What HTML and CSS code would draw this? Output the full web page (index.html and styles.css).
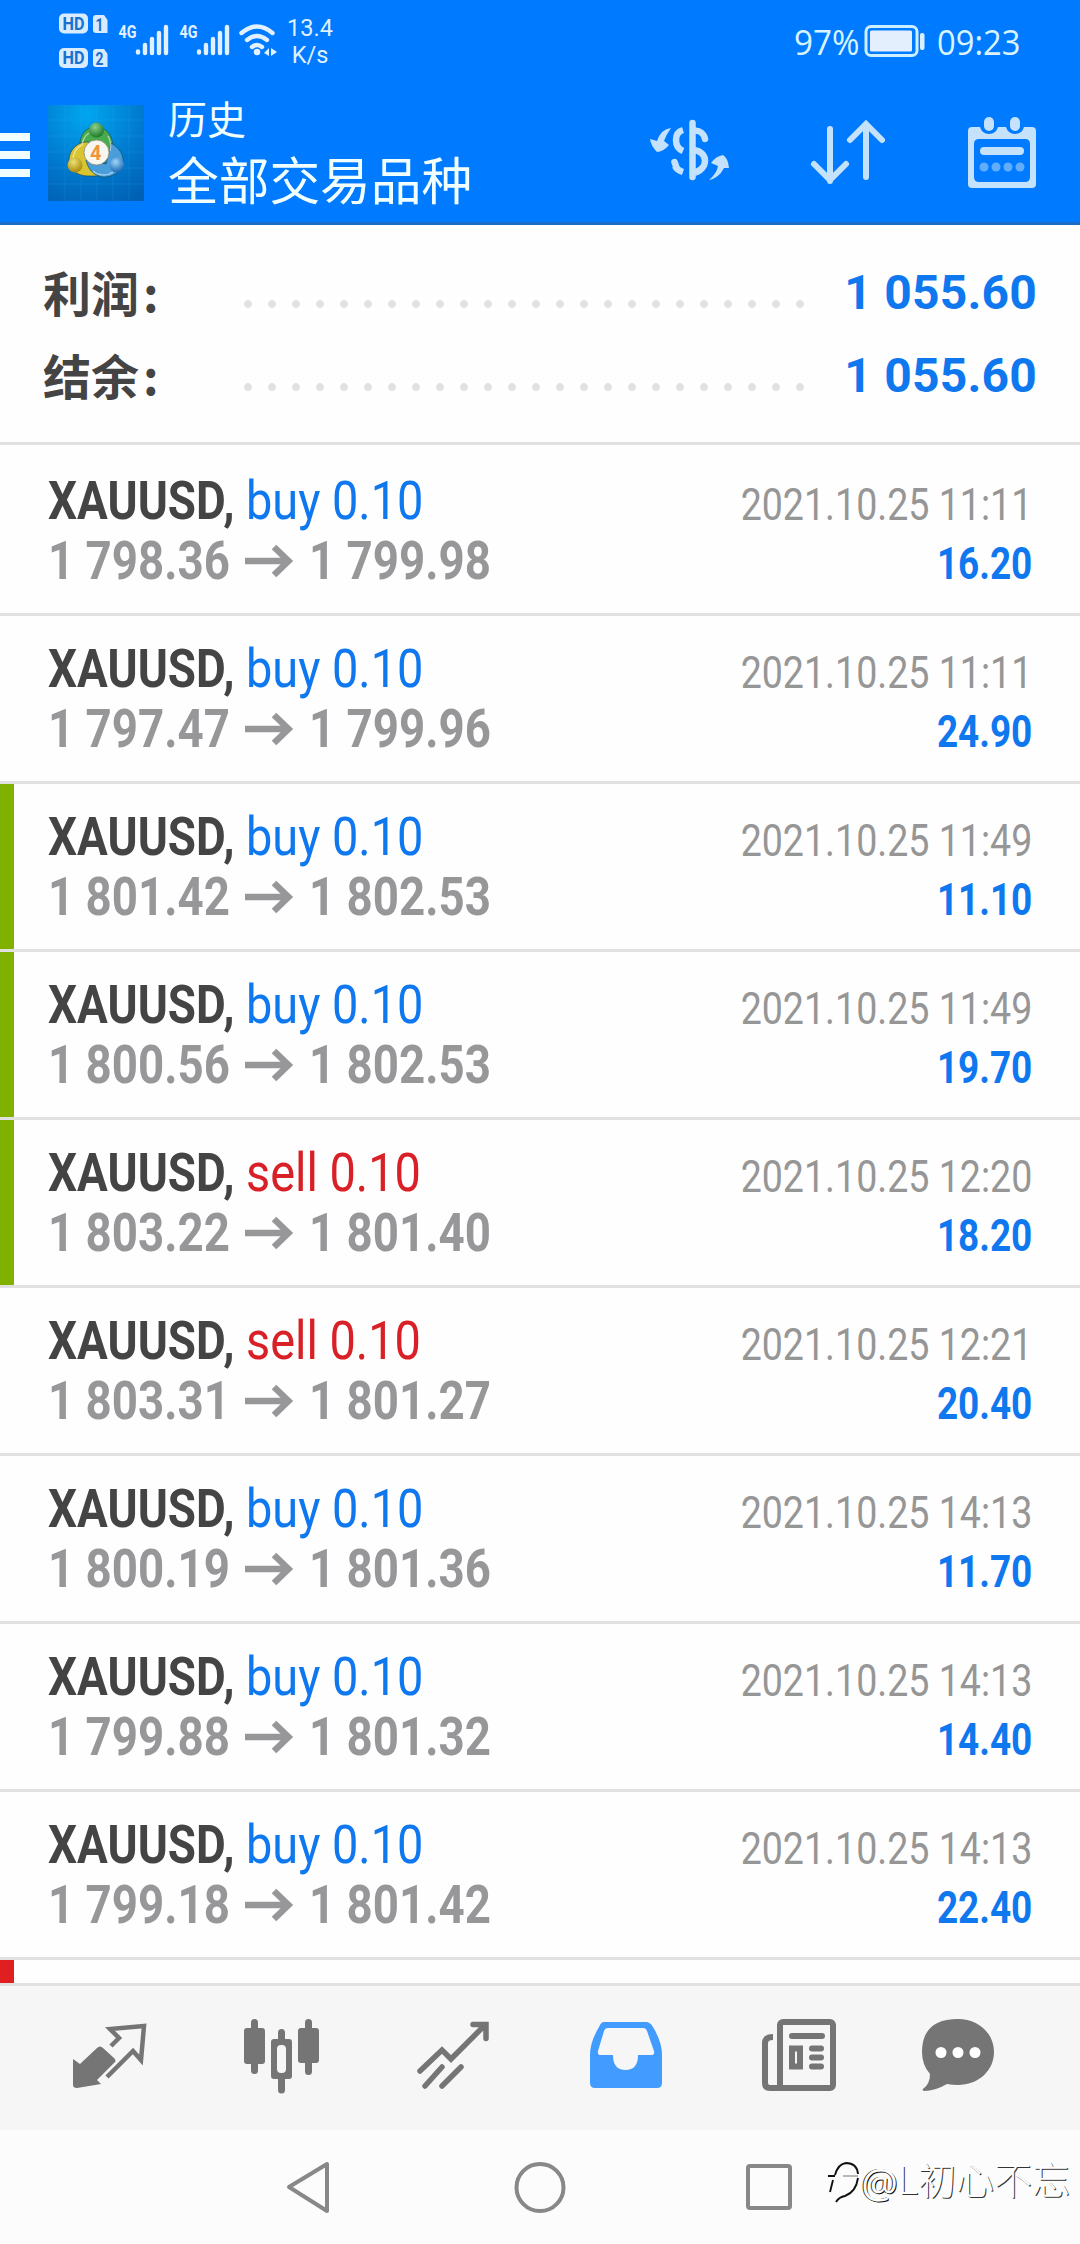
FILE: index.html
```html
<!DOCTYPE html>
<html lang="zh-CN">
<head>
<meta charset="utf-8">
<title>历史</title>
<link rel="stylesheet" href="styles.css">
</head>
<body>
<header class="top">
  <div class="status">
    <svg class="status-icons" width="230" height="76" viewBox="50 0 230 76">
      <g fill="#d9ecff">
        <rect x="59" y="13.500" width="29" height="20" rx="5"/><path d="M96 15h8l3.500 5v13H96q-3 0-3-3V18q0-3 3-3z"/>
        <rect x="59" y="48" width="29" height="20" rx="5"/><path d="M96 49h8l3.500 5v13H96q-3 0-3-3V52q0-3 3-3z"/>
      </g>
      <g class="hd"><text x="62.500" y="30" textLength="22" lengthAdjust="spacingAndGlyphs">HD</text><text x="95.500" y="31" textLength="8" lengthAdjust="spacingAndGlyphs">1</text>
      <text x="62.500" y="64" textLength="22" lengthAdjust="spacingAndGlyphs">HD</text><text x="95.500" y="65" textLength="8" lengthAdjust="spacingAndGlyphs">2</text></g>
      <g class="net"><text x="118.500" y="38" textLength="18" lengthAdjust="spacingAndGlyphs">4G</text><text x="179.500" y="38" textLength="18" lengthAdjust="spacingAndGlyphs">4G</text></g>
      <g stroke="#e2f1ff" stroke-width="4.400" stroke-linecap="round" fill="none">
        <path d="M138 51.500v1M145 45v8M152 39v14M159 33v20M166 27v26"/>
        <path d="M199 51.500v1M206 45v8M213 39v14M220 33v20M227 27v26"/>
        <path d="M241.500 33Q257 20 272.500 33M247 40Q257 32 267 40M252 47Q257 43 262 47"/>
      </g>
      <circle cx="257" cy="52" r="3.300" fill="#e2f1ff"/><path d="M269 48v8l-5-3zM271 48l6 4-6 4z" fill="#e2f1ff"/>
    </svg>
    <div class="speed">13.4<br>K/s</div>
    <div class="status-right">
      <span class="pct"><b>97%</b></span>
      <svg width="62" height="36" viewBox="0 0 62 36"><rect x="2" y="1.500" width="51" height="29" rx="5" fill="none" stroke="#cdeeff" stroke-width="3"/><rect x="6" y="5.500" width="42" height="21" rx="1.500" fill="#e3effd"/><rect x="56" y="8" width="4.500" height="17" rx="2" fill="#d7f0ff"/></svg>
      <span class="time"><b>09:23</b></span>
    </div>
  </div>
  <div class="bar">
    <svg class="menu" width="30" height="48" viewBox="0 0 30 48"><path d="M0 6h30M0 24h30M0 42h30" stroke="#f2ffff" stroke-width="8"/></svg>
    <svg class="logo" width="96" height="96" viewBox="0 0 96 96">
      <defs>
        <radialGradient id="bg" cx=".4" cy=".1" r="1"><stop offset="0" stop-color="#00a6f0"/><stop offset=".55" stop-color="#007bd0"/><stop offset="1" stop-color="#0061b4"/></radialGradient>
        <radialGradient id="gr" cx=".4" cy=".3" r=".7"><stop offset="0" stop-color="#8fd08a"/><stop offset="1" stop-color="#1c7a2c"/></radialGradient>
        <radialGradient id="ye" cx=".4" cy=".3" r=".7"><stop offset="0" stop-color="#efe074"/><stop offset="1" stop-color="#a8890c"/></radialGradient>
        <radialGradient id="bl" cx=".4" cy=".3" r=".7"><stop offset="0" stop-color="#9fd6f8"/><stop offset="1" stop-color="#1769b4"/></radialGradient>
      </defs>
      <rect width="96" height="96" fill="url(#bg)"/>
      <path d="M0 15h96M0 31h96M0 47h96M0 63h96M0 79h96M17 0v96M33 0v96M49 0v96M65 0v96M81 0v96" stroke="#45b5ff" stroke-opacity=".16"/>
      <g stroke="#174f5c" stroke-opacity=".7">
        <path d="M32 43C31 28 39 22 48 22c11 0 19 10 17 28l-9 6-6-17-8-1-6 5z" fill="#48ab4d"/>
        <path d="M41 37c-12-1-19 8-20 17-1 10 8 17 19 17h10L39 57z" fill="#d8c52f"/>
        <path d="M63 38c9 5 13 13 12 20-2 9-11 15-21 14-9-2-14-8-16-17l20 4z" fill="#4a9ddb"/>
      </g>
      <g fill="none" stroke="#fff" stroke-opacity=".5" stroke-width="1.500"><path d="M34 40c1-6 4-10 7-12M25 53c1-6 4-11 9-13M45 66c5 5 15 5 20 1M60 31q4 7 2 15"/></g>
      <circle cx="48.500" cy="25" r="7.500" fill="url(#gr)"/><circle cx="27" cy="60" r="7.500" fill="url(#ye)"/><circle cx="69" cy="60" r="7.500" fill="url(#bl)"/>
      <circle cx="48.500" cy="47.500" r="12.500" fill="#f8f6f1" stroke="#8a8a70" stroke-width=".8"/>
      <text class="four" x="42" y="54.500">4</text>
    </svg>
    <div class="titles"><div class="t1">历史</div><div class="t2">全部交易品种</div></div>
    <svg class="act" width="80" height="80" viewBox="0 0 80 80">
      <g fill="#c5e2fc"><path d="M21 15Q16 22 14 28L19 32Q13 39 7 39Q1 33 0 26L7 28Q11 16 21 15z"/><path d="M59 67q8-7 9-14l-7-3q5-7 12-8 5 3 6 13l-5 0q-5 10-15 12z"/></g>
      <g fill="none" stroke="#c5e2fc" stroke-width="6.500"><path d="M33 17Q26 19 26 27T33 38M33 59Q27 57 25 53"/><path d="M24.500 49l1.500 4M42.500 10v54M44 18c6-1 10 3 11 8" stroke-linecap="round"/><path d="M43 37c16 1 16 20 0 23"/></g>
    </svg>
    <svg class="act" width="80" height="80" viewBox="0 0 80 80"><path d="M22 16v52M6 51l16 16 16-16M58 64V11M42 27l16-16 16 16" fill="none" stroke="#c5e2fc" stroke-width="6" stroke-linecap="round"/></svg>
    <svg class="act" width="80" height="80" viewBox="0 0 80 80">
      <path fill-rule="evenodd" fill="#c5e2fc" d="M6 14h8q2 7 9 7t9-7h8q2 7 9 7t9-7h8q4 0 4 4v53q0 4-4 4H6q-4 0-4-4V18q0-4 4-4zM13 26q-5 0-5 5v33q0 5 5 5h46q5 0 5-5V31q0-5-5-5z"/>
      <g fill="#c5e2fc"><rect x="18" y="4" width="10" height="14" rx="5"/><rect x="44" y="4" width="10" height="14" rx="5"/><rect x="14" y="34" width="44" height="8" rx="4"/></g>
      <g fill="#62adfa"><circle cx="18" cy="54" r="4.500"/><circle cx="30" cy="54" r="4.500"/><circle cx="42" cy="54" r="4.500"/><circle cx="54" cy="54" r="4.500"/></g>
    </svg>
  </div>
</header>
<section class="summary">
  <div class="sum"><span class="lab">利润<span class="colon">:</span></span><span class="dots"></span><span class="val">1 055.60</span></div>
  <div class="sum"><span class="lab">结余<span class="colon">:</span></span><span class="dots"></span><span class="val">1 055.60</span></div>
</section>
<main class="list" id="list"></main>
<nav class="tabs">
  <svg width="80" height="80" viewBox="0 0 80 80"><path d="M8 73q-4 0-4-3V44l7 5 17-16q3-3 6 0l11 10q3 3 0 5L28 65l4 4z" fill="#757575"/><path d="M42 31l8-8-9-9 34-3-3 34-8-9-26 26" fill="none" stroke="#757575" stroke-width="4.500"/></svg>
  <svg width="80" height="80" viewBox="0 0 80 80"><g fill="#757575"><rect x="2" y="13" width="21" height="36" rx="3"/><rect x="56" y="13" width="21" height="35" rx="3"/><path fill-rule="evenodd" d="M32 24h15q3 0 3 3v34q0 3-3 3H32q-3 0-3-3V27q0-3 3-3zM39 30q-4 0-4 4v20q0 4 4 4h1q4 0 4-4V34q0-4-4-4z"/></g><path d="M12.500 7.500v48M66.500 7.500v49M39.500 17.500v8M39.500 63v12" stroke="#757575" stroke-width="7" stroke-linecap="round"/></svg>
  <svg width="80" height="80" viewBox="0 0 80 80"><path d="M5 56l22-21 9 9 33-33M10 71l17-19M27 71l19-19M58 9.500h13v14" fill="none" stroke="#757575" stroke-width="5.500" stroke-linecap="round" stroke-linejoin="miter"/></svg>
  <svg width="80" height="80" viewBox="0 0 80 80"><path fill-rule="evenodd" fill="#429bff" d="M16 7h42q4 0 7 5 9 15 9 28v28q0 5-5 5H7q-5 0-5-5V40q0-13 9-28 2-5 5-5zM20 13q-3 0-4 3L10 36q-1 4 3 4h12q0 15 12.500 15T50 40h13q4 0 3-4l-7-20q-1-3-4-3z"/></svg>
  <svg width="80" height="80" viewBox="0 0 80 80"><g fill="none" stroke="#757575" stroke-width="6"><rect x="19" y="7" width="53" height="66" rx="3"/><path d="M12 22q-8 0-8 6v40q0 5 5 5h12"/><path d="M31 21h30M51 33.500h9M51 42.500h9M51 51.500h9" stroke-linecap="round"/><rect x="31" y="33.500" width="8" height="18"/></g></svg>
  <svg class="chat" width="80" height="80" viewBox="0 0 80 80"><path d="M40 4c20 0 36 14 36 33S60 70 40 70q-6 0-11-1Q17 76 6 76q-2-1-1-2 7-5 7-15Q4 50 4 37 4 4 40 4z" fill="#757575"/><g fill="#fff"><circle cx="23" cy="37.500" r="5.500"/><circle cx="40" cy="37.500" r="5.500"/><circle cx="57" cy="37.500" r="5.500"/></g></svg>
</nav>
<footer class="sysnav">
  <svg class="keys" width="520" height="60" viewBox="280 0 520 60"><g fill="none" stroke="#888" stroke-width="4" stroke-linejoin="round"><path d="M289 29L327 6v47z"/><circle cx="540" cy="29.500" r="23.500"/><rect x="748" y="8" width="42" height="42" rx="2"/></g></svg>
  <div class="mark"><svg width="34" height="48" viewBox="0 0 34 48"><path d="M1 18h7M8 17Q11 6 19 5q11 0 12 11M31 20Q29 34 18 38q-6 1-9 6M6 22L3 34" fill="none" stroke="#111" stroke-width="1.900"/><path d="M16 18h15" stroke="#777"/></svg><span class="at">@</span><span class="nick">L初心不忘</span></div>
</footer>
<script src="app.js"></script>
</body>
</html>
```
FILE: app.js
```js
const deals = [
  ['buy', '1 798.36', '1 799.98', '11:11', '16.20', ''],
  ['buy', '1 797.47', '1 799.96', '11:11', '24.90', ''],
  ['buy', '1 801.42', '1 802.53', '11:49', '11.10', 'tp'],
  ['buy', '1 800.56', '1 802.53', '11:49', '19.70', 'tp'],
  ['sell', '1 803.22', '1 801.40', '12:20', '18.20', 'tp'],
  ['sell', '1 803.31', '1 801.27', '12:21', '20.40', ''],
  ['buy', '1 800.19', '1 801.36', '14:13', '11.70', ''],
  ['buy', '1 799.88', '1 801.32', '14:13', '14.40', ''],
  ['buy', '1 799.18', '1 801.42', '14:13', '22.40', '']
];
const arrow = '<svg class="arrow" width="50" height="34" viewBox="0 0 50 34"><path d="M0 17h44M29 3l14.500 14L29 31" fill="none" stroke="#97979a" stroke-width="6.500"/></svg>';
document.getElementById('list').innerHTML = deals.map(([side, from, to, time, profit, mark]) => `
  <article class="row ${mark}">
    <div class="left">
      <div class="sym"><b class="name">XAUUSD,</b><span class="side ${side}">${side} 0.10</span></div>
      <div class="prices"><span class="price">${from}</span>${arrow}<span class="price">${to}</span></div>
    </div>
    <div class="right"><div class="date">2021.10.25 ${time}</div><div class="profit">${profit}</div></div>
  </article>`).join('') + '<article class="row sl"></article>';
```
FILE: styles.css
```css
* { box-sizing: border-box; }
body { margin: 0; width: 1080px; height: 2244px; overflow: hidden; background: #fefefe; display: flex; flex-direction: column; font-family: Roboto, "Noto Sans CJK SC", sans-serif; }
svg { display: block; flex: none; }
.top { height: 225px; flex: none; background: #007aff; border-bottom: 3px solid #1a6dc4; }
.status { height: 80px; display: flex; padding-left: 50px; color: #dff1ff; }
.hd { font: 700 18px Roboto, sans-serif; fill: #1a70cf; }
.net { font: 700 18px Roboto, sans-serif; fill: #e2f1ff; }
.speed { width: 60px; padding-top: 15px; font-size: 23.5px; line-height: 27px; text-align: center; }
.status-right { margin-left: auto; padding: 25px 58px 0 0; display: flex; color: #d8f4ff; }
.pct, .time { font: 35px/34px "Open Sans", sans-serif; white-space: nowrap; }
.status-right b { font-weight: 400; display: block; transform-origin: 0 0; }
.pct { width: 70px; }
.pct b { transform: scaleX(.95); }
.time { width: 85px; margin-left: 11px; }
.time b { transform: scaleX(.935); }
.bar { height: 142px; display: flex; }
.menu { margin-top: 51px; }
.logo { margin: 25px 0 0 18px; }
.four { font: 700 20px Roboto, sans-serif; fill: #f0943c; }
.titles { margin-left: 24px; width: 482px; flex: none; color: #f2ffff; white-space: nowrap; }
.t1 { font-size: 39px; line-height: 46px; margin-top: 18px; }
.t2 { font-size: 50.7px; line-height: 58px; margin-top: 10px; }
.act { margin: 33px 78px 0 0; }
.summary { height: 220px; flex: none; padding: 26px 43px 0 43px; border-bottom: 3px solid #e1e1e1; }
.sum { height: 83px; display: flex; align-items: center; }
.lab { width: 193px; flex: none; font-weight: 700; font-size: 48px; color: #444; line-height: 60px; padding-top: 2px; }
.colon { font-family: "Noto Sans CJK SC", sans-serif; margin-left: 4px; }
.dots { width: 576px; flex: none; height: 24px; margin-top: 23px; background: radial-gradient(circle, #e1e1e1 3.5px, transparent 4.3px) 0 0 / 24px 24px; }
.val { margin-left: auto; font-weight: 700; font-size: 48px; letter-spacing: .2px; color: #0f78ee; }
.list { flex: 1; overflow: hidden; padding-top: 3px; }
.row { height: 168px; border-bottom: 3px solid #e1e1e1; padding: 21px 48px 0 48px; display: flex; justify-content: space-between; white-space: nowrap; }
.tp, .sl { background: linear-gradient(#80b000, #80b000) 0 0 / 14px 100% no-repeat; }
.sl { background-image: linear-gradient(#e02020, #e02020); }
.sym, .prices { display: flex; height: 60px; line-height: 64px; font-size: 54px; }
.name, .side, .price, .date, .profit { display: block; transform-origin: 0 0; }
.name { width: 198px; color: #444; transform: scaleX(.848); }
.side { transform: scaleX(.868); }
.buy { color: #0f78ee; }
.sell { color: #d92027; }
.prices { font-weight: 700; color: #97979a; }
.price { width: 195px; transform: scaleX(.846); }
.arrow { margin: 15px 14px 0 2px; }
.right { padding-top: 6px; text-align: right; }
.date, .profit { font-size: 45px; line-height: 59px; transform-origin: 100% 0; }
.date { color: #969696; transform: scaleX(.835); }
.profit { font-weight: 700; color: #0f78ee; transform: scaleX(.82); }
.tabs { height: 147px; flex: none; background: #f6f6f6; border-top: 3px solid #e1e1e1; padding: 29px 0 0 69px; display: flex; gap: 93px; }
.chat { margin-left: -16px; }
.sysnav { height: 114px; flex: none; background: #fcfcfc; display: flex; padding: 28px 10px 0 280px; }
.mark { display: flex; margin-left: auto; color: #fff; white-space: nowrap; text-shadow: 1px 1px 0 #333; }
.at { font: 41px/48px "Open Sans", sans-serif; text-shadow: 1px 1px 0 #111, -1px 0 0 #333; }
.nick { font-size: 38px; line-height: 46px; font-weight: 300; }
```
